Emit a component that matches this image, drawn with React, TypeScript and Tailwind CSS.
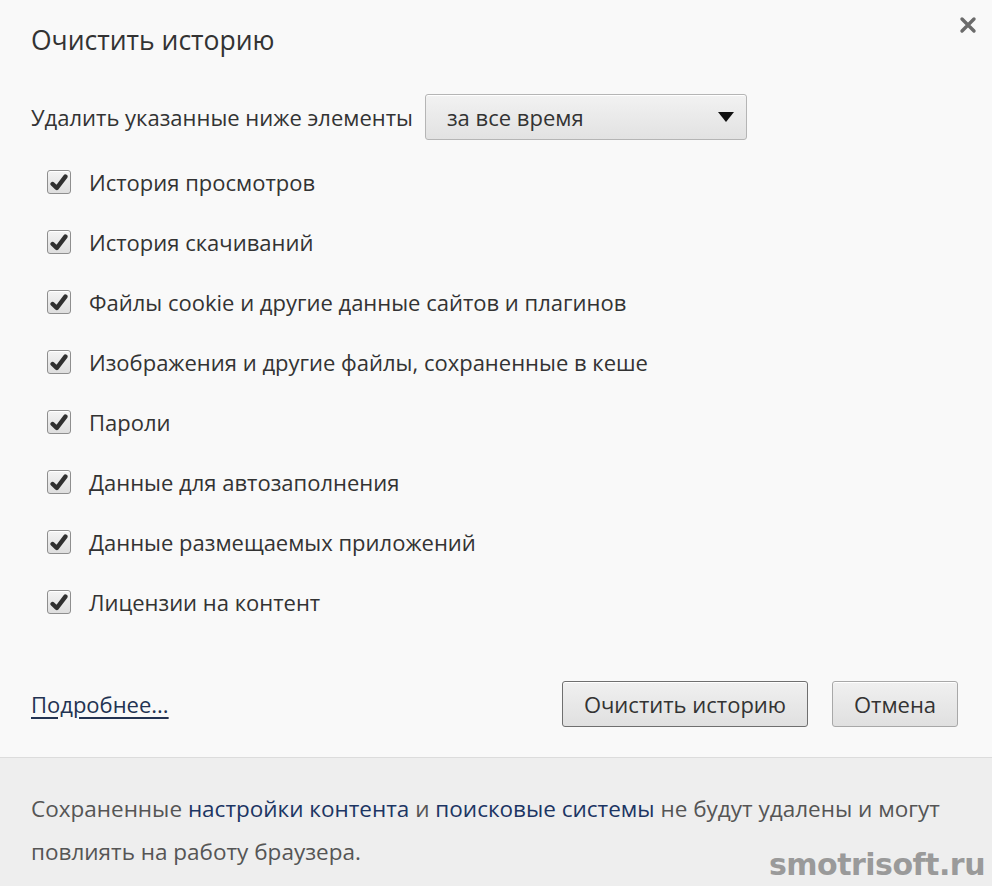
import { useState } from 'react';

const ITEMS = [
  'История просмотров',
  'История скачиваний',
  'Файлы cookie и другие данные сайтов и плагинов',
  'Изображения и другие файлы, сохраненные в кеше',
  'Пароли',
  'Данные для автозаполнения',
  'Данные размещаемых приложений',
  'Лицензии на контент',
];

function CheckBox({ checked, onToggle }: { checked: boolean; onToggle: () => void }) {
  return (
    <button
      onClick={onToggle}
      className="flex h-[24px] w-[24px] shrink-0 items-center justify-center rounded-[3px] border border-[#8f8f8f] bg-gradient-to-b from-[#f4f4f4] to-[#dedede] shadow-[inset_0_1px_0_#fff]"
    >
      {checked && (
        <svg width="18" height="17" viewBox="0 0 18 17">
          <path d="M2.6 10 L6.8 14 L15.4 2.6" fill="none" stroke="#303030" strokeWidth="4.4" strokeLinecap="round" strokeLinejoin="round" />
        </svg>
      )}
    </button>
  );
}

export default function App() {
  const [checked, setChecked] = useState(ITEMS.map(() => true));

  return (
    <div className="relative flex h-[886px] w-[992px] flex-col bg-[#f9f9f9] text-[#333] font-['Open_Sans','Noto_Sans',sans-serif]">
      <div className="flex flex-1 flex-col px-[31px]">
        <div className="flex items-start justify-between pt-[22px]">
          <h1 className="text-[26.5px] font-normal leading-[36px] text-[#333]">Очистить историю</h1>
          <button className="mr-[-16px] mt-[-6px] text-[#666]">
            <svg width="18" height="18" viewBox="0 0 18 18">
              <path d="M3 3 L15 15 M15 3 L3 15" stroke="#6b6b6b" strokeWidth="3.4" strokeLinecap="round" />
            </svg>
          </button>
        </div>

        <div className="mt-[36px] flex items-center gap-[12px]">
          <span className="text-[22px]">Удалить указанные ниже элементы</span>
          <div className="flex h-[46px] w-[322px] items-center justify-between rounded-[3px] border border-[#b5b5b5] bg-gradient-to-b from-[#f2f2f2] to-[#e2e2e2] pl-[21px] pr-[12px] shadow-[inset_0_1px_0_#fff]">
            <span className="text-[22px]">за все время</span>
            <svg width="16" height="10" viewBox="0 0 16 10">
              <path d="M0 0 H16 L8 10 Z" fill="#111" />
            </svg>
          </div>
        </div>

        <div className="mt-[30px] flex flex-col gap-[36px] pl-[16px]">
          {ITEMS.map((label, i) => (
            <label key={label} className="flex h-[24px] items-center gap-[18px]">
              <CheckBox
                checked={checked[i]}
                onToggle={() => setChecked(checked.map((c, j) => (j === i ? !c : c)))}
              />
              <span className="text-[22px]">{label}</span>
            </label>
          ))}
        </div>

        <div className="mt-[67px] flex items-center justify-between">
          <a className="text-[22px] text-[#233352] underline underline-offset-[4px]">Подробнее...</a>
          <div className="mr-[3px] flex gap-[24px]">
            <button className="h-[46px] w-[246px] rounded-[3px] border border-[#6f6f6f] bg-gradient-to-b from-[#f0f0f0] to-[#e0e0e0] text-[22px] text-[#333] shadow-[inset_0_1px_0_#fff]">
              Очистить историю
            </button>
            <button className="h-[46px] w-[126px] rounded-[3px] border border-[#a8a8a8] bg-gradient-to-b from-[#f0f0f0] to-[#e0e0e0] text-[22px] text-[#333] shadow-[inset_0_1px_0_#fff]">
              Отмена
            </button>
          </div>
        </div>
      </div>

      <div className="h-[129px] border-t border-[#dcdcdc] bg-[#eeeeee] px-[31px] pt-[29px] text-[22.5px] leading-[43px] text-[#555]">
        Сохраненные <a className="text-[#1c3563]">настройки контента</a> и{' '}
        <a className="text-[#1c3563]">поисковые системы</a> не будут удалены и могут
        <br />
        повлиять на работу браузера.
      </div>

      <div className="absolute bottom-[6px] right-[7px] font-['DejaVu_Sans',sans-serif] text-[30px] font-bold leading-none tracking-[-0.5px] text-[#9a9a9a]">
        smotrisoft.ru
      </div>
    </div>
  );
}
